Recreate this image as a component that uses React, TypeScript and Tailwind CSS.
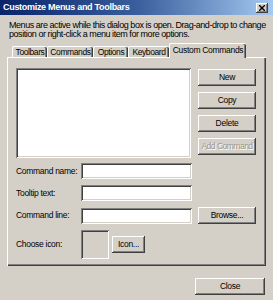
const raised =
  "shadow-[inset_-1px_-1px_#404040,inset_1px_1px_#ffffff,inset_-2px_-2px_#808080,inset_2px_2px_#d4d0c8]";
const sunken =
  "shadow-[inset_1px_1px_#808080,inset_-1px_-1px_#ffffff,inset_2px_2px_#404040,inset_-2px_-2px_#d4d0c8]";

function Button({ label, disabled, className = "" }: { label: string; disabled?: boolean; className?: string }) {
  return (
    <div className={`flex items-center justify-center whitespace-nowrap bg-[#d4d0c8] ${raised} ${className}`}>
      <span className={disabled ? "text-[#9a978f] tracking-[-0.5px] [text-shadow:1px_1px_#ffffff]" : "text-black"}>
        {label}
      </span>
    </div>
  );
}

function Tab({ label, width, active }: { label: string; width: string; active?: boolean }) {
  if (active) {
    return (
      <div
        className={`${width} h-[15px] -mb-px relative z-10 flex items-center justify-center whitespace-nowrap bg-[#d4d0c8] border-t border-l border-white rounded-t-[2px] shadow-[inset_-1px_0_#404040,inset_-2px_0_#808080]`}
      >
        <span className="-mt-[2px]">{label}</span>
      </div>
    );
  }
  return (
    <div
      className={`${width} h-[11px] flex items-center justify-center whitespace-nowrap tracking-[-0.4px] border-t border-l border-white rounded-t-[2px] shadow-[inset_-1px_0_#404040,inset_-2px_0_#808080]`}
    >
      <span>{label}</span>
    </div>
  );
}

function Field({ label, children }: { label: string; children?: React.ReactNode }) {
  return (
    <div className="flex items-center">
      <span className="w-[65px] whitespace-nowrap">{label}</span>
      <div className={`w-[111px] h-[16px] bg-white ${sunken}`} />
      {children}
    </div>
  );
}

export default function App() {
  return (
    <div
      className="w-[273px] h-[300px] bg-[#d4d0c8] flex flex-col text-[8.5px] tracking-[-0.3px] text-black overflow-hidden"
      style={{ fontFamily: '"Liberation Sans", Arial, sans-serif' }}
    >
      <div className="h-[15px] shrink-0 flex items-center justify-between pl-[3px] pr-[5px] bg-gradient-to-r from-[#0a246a] via-[#3a5e9c] to-[#a6caf0]">
        <span className="text-white font-bold text-[9px] tracking-[-0.3px] whitespace-nowrap">Customize Menus and Toolbars</span>
        <div className={`w-[12px] h-[10px] flex items-center justify-center bg-[#d4d0c8] ${raised}`}>
          <svg width="6" height="6" viewBox="0 0 6 6">
            <path d="M0 0L6 6M6 0L0 6" stroke="#000" strokeWidth="1.4" />
          </svg>
        </div>
      </div>

      <p className="mt-[6px] ml-[9px] leading-[9px] text-[9px] tracking-[-0.45px] whitespace-nowrap">
        Menus are active while this dialog box is open. Drag-and-drop to change
        <br />
        position or right-click a menu item for more options.
      </p>

      <div className="mx-[7px] mt-[4px] flex flex-col">
        <div className="flex items-end pl-[5px] h-[14px]">
          <Tab label="Toolbars" width="w-[35px]" />
          <Tab label="Commands" width="w-[46px]" />
          <Tab label="Options" width="w-[35px]" />
          <Tab label="Keyboard" width="w-[41px]" />
          <Tab label="Custom Commands" width="w-[77px]" active />
        </div>
        <div className="h-[209px] shadow-[inset_1px_1px_#ffffff,inset_-1px_-1px_#404040,inset_-2px_-2px_#808080] pl-[9px] pt-[11px] flex flex-col">
          <div className="flex">
            <div className={`w-[175px] h-[90px] bg-white ${sunken}`} />
            <div className="ml-[7px] w-[58px] flex flex-col gap-[6px] pt-px">
              <Button label="New" className="h-[17px]" />
              <Button label="Copy" className="h-[17px]" />
              <Button label="Delete" className="h-[17px]" />
              <Button label="Add Command" disabled className="h-[17px]" />
            </div>
          </div>

          <div className="mt-[5px] flex flex-col gap-[6px]">
            <Field label="Command name:" />
            <Field label="Tooltip text:" />
            <Field label="Command line:">
              <Button label="Browse..." className="ml-[6px] w-[58px] h-[17px]" />
            </Field>
            <div className="flex items-center">
              <span className="w-[65px] whitespace-nowrap">Choose icon:</span>
              <div className={`w-[28px] h-[29px] ${sunken}`} />
              <Button label="Icon..." className="ml-[3px] w-[33px] h-[17px]" />
            </div>
          </div>
        </div>
      </div>

      <div className="flex justify-end pr-[8px] mt-[12px]">
        <Button label="Close" className="w-[70px] h-[17px]" />
      </div>
    </div>
  );
}
